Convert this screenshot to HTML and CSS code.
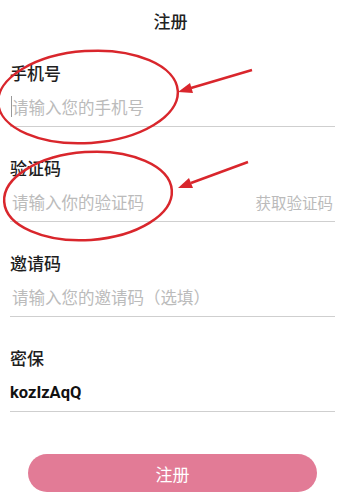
FILE: index.html
```html
<!doctype html>
<html lang="zh-CN">
<head>
	<meta charset="UTF-8">
	<meta name="viewport" content="width=device-width, initial-scale=1">
	<title>注册</title>
	<link rel="stylesheet" href="styles.css">
</head>
<body>
	<div class="page">
		<div class="header">注册</div>
		<form class="reg-form">
			<div class="field">
				<label class="field-label">手机号</label>
				<div class="field-input">
					<span class="caret"></span>
					<span class="placeholder">请输入您的手机号</span>
				</div>
			</div>
			<div class="field">
				<label class="field-label">验证码</label>
				<div class="field-input">
					<span class="placeholder">请输入你的验证码</span>
					<span class="get-code">获取验证码</span>
				</div>
			</div>
			<div class="field">
				<label class="field-label">邀请码</label>
				<div class="field-input">
					<span class="placeholder">请输入您的邀请码（选填）</span>
				</div>
			</div>
			<div class="field">
				<label class="field-label">密保</label>
				<div class="field-input">
					<span class="value">kozIzAqQ</span>
				</div>
			</div>
			<button type="button" class="submit-btn">注册</button>
		</form>

		<!-- 标注：红圈和箭头 -->
		<svg class="marks" width="341" height="500" viewBox="0 0 341 500">
			<ellipse cx="88" cy="97" rx="90" ry="46" transform="rotate(-4 88 97)" />
			<ellipse cx="88" cy="196" rx="84" ry="44" transform="rotate(-4 88 196)" />
			<line x1="252" y1="70" x2="191" y2="88" />
			<polygon points="178,92 193,93 190,83" />
			<line x1="248" y1="162" x2="191" y2="183" />
			<polygon points="178,188 193,188 189,178" />
		</svg>
	</div>
</body>
</html>
```

FILE: styles.css
```css
*{
	margin:0;
	padding:0;
	box-sizing:border-box;
}
body{
	background:#fff;
	font-family:"Noto Sans CJK SC", "Noto Sans", sans-serif;
	color:#222;
}
.page{
	position:relative;
	width:341px;
	height:500px;
	overflow:hidden;
}
.header{
	height:32px;
	padding-top:10px;
	line-height:22px;
	text-align:center;
	font-size:17px;
	font-weight:500;
}
.reg-form{
	padding:0 6px 0 10px;
}
.field{
	padding:29px 0 7px;
	border-bottom:1px solid #cfcfcf;
}
.field-label{
	display:block;
	line-height:24px;
	font-size:17px;
	font-weight:500;
	color:#1e1e1e;
}
.field-input{
	display:flex;
	align-items:center;
	margin-top:10px;
	height:24px;
	position:relative;
}
.placeholder{
	flex:1;
	font-size:16.5px;
	color:#bbbbbb;
	padding-left:2px;
}
.caret{
	position:absolute;
	left:1px;
	top:1px;
	width:1px;
	height:21px;
	background:#999;
}
.get-code{
	font-size:15.5px;
	color:#bbbbbb;
	padding-right:2px;
}
.value{
	font-family:Roboto, "Liberation Sans", sans-serif;
	font-weight:bold;
	font-size:16.5px;
	color:#111;
}
.submit-btn{
	display:block;
	width:289px;
	height:38px;
	margin:42px 0 0 18px;
	border:none;
	border-radius:19px;
	background:#e27b96;
	color:#fff;
	font-family:"Noto Sans CJK SC", sans-serif;
	font-size:17px;
	outline:none;
}
.marks{
	position:absolute;
	left:0;
	top:0;
	pointer-events:none;
}
.marks ellipse, .marks line{
	fill:none;
	stroke:#d9262c;
	stroke-width:2.5;
}
.marks polygon{
	fill:#d9262c;
}
```
